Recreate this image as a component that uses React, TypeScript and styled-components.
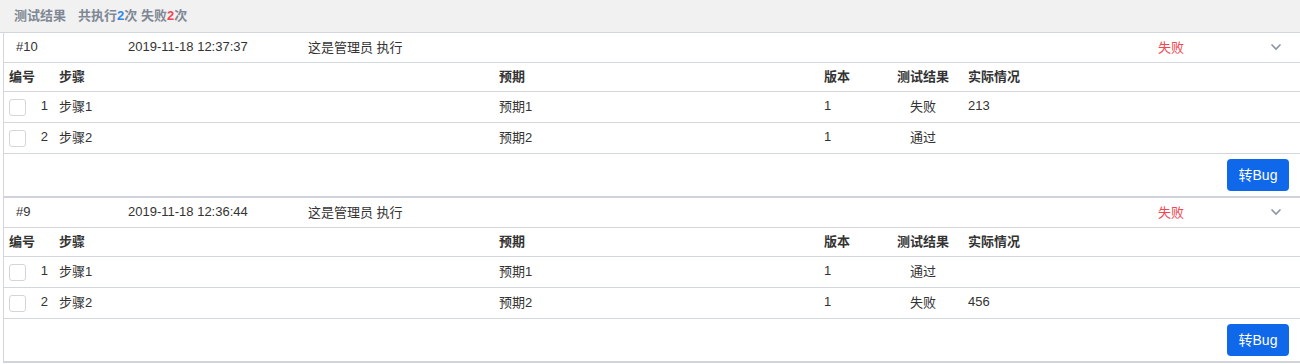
import React from 'react';
import styled, {createGlobalStyle} from 'styled-components';

const GlobalStyle = createGlobalStyle`
  body {
    margin: 0;
    background: #fff;
    font-family: "Liberation Sans", Arial, "Noto Sans CJK SC", sans-serif;
    font-size: 13px;
    color: #333;
  }
`

// rows carry a little bottom padding: the CJK font sits low in its line box
const SummaryBar = styled.div`
  height: 29px;
  padding-bottom: 3px;
  display: flex;
  align-items: center;
  gap: 12px;
  padding-left: 14px;
  background: #f1f1f1;
  border-bottom: 1px solid #d3d6de;
  color: #7f8894;
  font-weight: bold;
`

const Count = styled.span<{$tone: 'blue' | 'red'}>`
  color: ${p => (p.$tone === 'blue' ? '#2f86e8' : '#f2474f')};
`

const Section = styled.div`
  margin-left: 3px;
  border-left: 1px solid #d3d6de;
  border-bottom: 2px solid #d0d3db;
`

const RunRow = styled.div`
  height: 26px;
  padding-bottom: 3px;
  display: grid;
  grid-template-columns: 112px 180px 1fr 112px 30px;
  align-items: center;
  padding-left: 12px;
  border-bottom: 1px solid #d3d6de;
`

const Failed = styled.span`
  color: #f2474f;
`

const Chevron = styled.svg`
  width: 12px;
  height: 8px;
  display: block;
  margin-top: 2px;
`

const Grid = styled.div<{$head?: boolean}>`
  height: ${p => (p.$head ? '25px' : '27px')};
  padding-bottom: 3px;
  display: grid;
  grid-template-columns: 50px 440px 325px 73px 62px 1fr;
  align-items: center;
  border-bottom: 1px solid #d3d6de;
  font-weight: ${p => (p.$head ? 'bold' : 'normal')};
`

const Cell = styled.div<{$center?: boolean; $pad?: number}>`
  padding-left: ${p => (p.$pad ?? 5)}px;
  text-align: ${p => (p.$center ? 'center' : 'left')};
  white-space: nowrap;
`

const IdCell = styled.div`
  display: flex;
  align-items: center;
  justify-content: space-between;
  padding: 0 6px 0 5px;
`

const Check = styled.span`
  width: 15px;
  height: 15px;
  margin-top: 3px;
  border: 1px solid #d6d6d6;
  border-radius: 3px;
  background: #fff;
`

const Footer = styled.div`
  height: 42px;
  display: flex;
  align-items: center;
  justify-content: flex-end;
  padding-right: 11px;
`

const BugButton = styled.button`
  width: 62px;
  height: 32px;
  padding: 0 0 2px;
  border: none;
  border-radius: 4px;
  background: #0f67e9;
  color: #fff;
  font-family: inherit;
  font-size: 14px;
`

type Step = {id: number; name: string; expect: string; version: string; result: string; actual: string};
type Run = {no: string; time: string; who: string; steps: Step[]};

const runs: Run[] = [
  {
    no: '#10', time: '2019-11-18 12:37:37', who: '这是管理员 执行',
    steps: [
      {id: 1, name: '步骤1', expect: '预期1', version: '1', result: '失败', actual: '213'},
      {id: 2, name: '步骤2', expect: '预期2', version: '1', result: '通过', actual: ''},
    ],
  },
  {
    no: '#9', time: '2019-11-18 12:36:44', who: '这是管理员 执行',
    steps: [
      {id: 1, name: '步骤1', expect: '预期1', version: '1', result: '通过', actual: ''},
      {id: 2, name: '步骤2', expect: '预期2', version: '1', result: '失败', actual: '456'},
    ],
  },
];

function App() {
  return (
    <>
      <GlobalStyle/>
      <SummaryBar>
        <span>测试结果</span>
        <span>共执行<Count $tone="blue">2</Count>次 失败<Count $tone="red">2</Count>次</span>
      </SummaryBar>
      {runs.map(run => (
        <Section key={run.no}>
          <RunRow>
            <span>{run.no}</span>
            <span>{run.time}</span>
            <span>{run.who}</span>
            <Failed>失败</Failed>
            <Chevron viewBox="0 0 12 8">
              <path d="M1.5 1.5 L6 6 L10.5 1.5" fill="none" stroke="#8a94a6" strokeWidth="1.6"/>
            </Chevron>
          </RunRow>
          <Grid $head>
            <Cell>编号</Cell>
            <Cell>步骤</Cell>
            <Cell>预期</Cell>
            <Cell>版本</Cell>
            <Cell $center $pad={0}>测试结果</Cell>
            <Cell $pad={14}>实际情况</Cell>
          </Grid>
          {run.steps.map(s => (
            <Grid key={s.id}>
              <IdCell><Check/>{s.id}</IdCell>
              <Cell>{s.name}</Cell>
              <Cell>{s.expect}</Cell>
              <Cell>{s.version}</Cell>
              <Cell $center $pad={0}>{s.result}</Cell>
              <Cell $pad={14}>{s.actual}</Cell>
            </Grid>
          ))}
          <Footer>
            <BugButton>转Bug</BugButton>
          </Footer>
        </Section>
      ))}
    </>
  );
}

export default App;
